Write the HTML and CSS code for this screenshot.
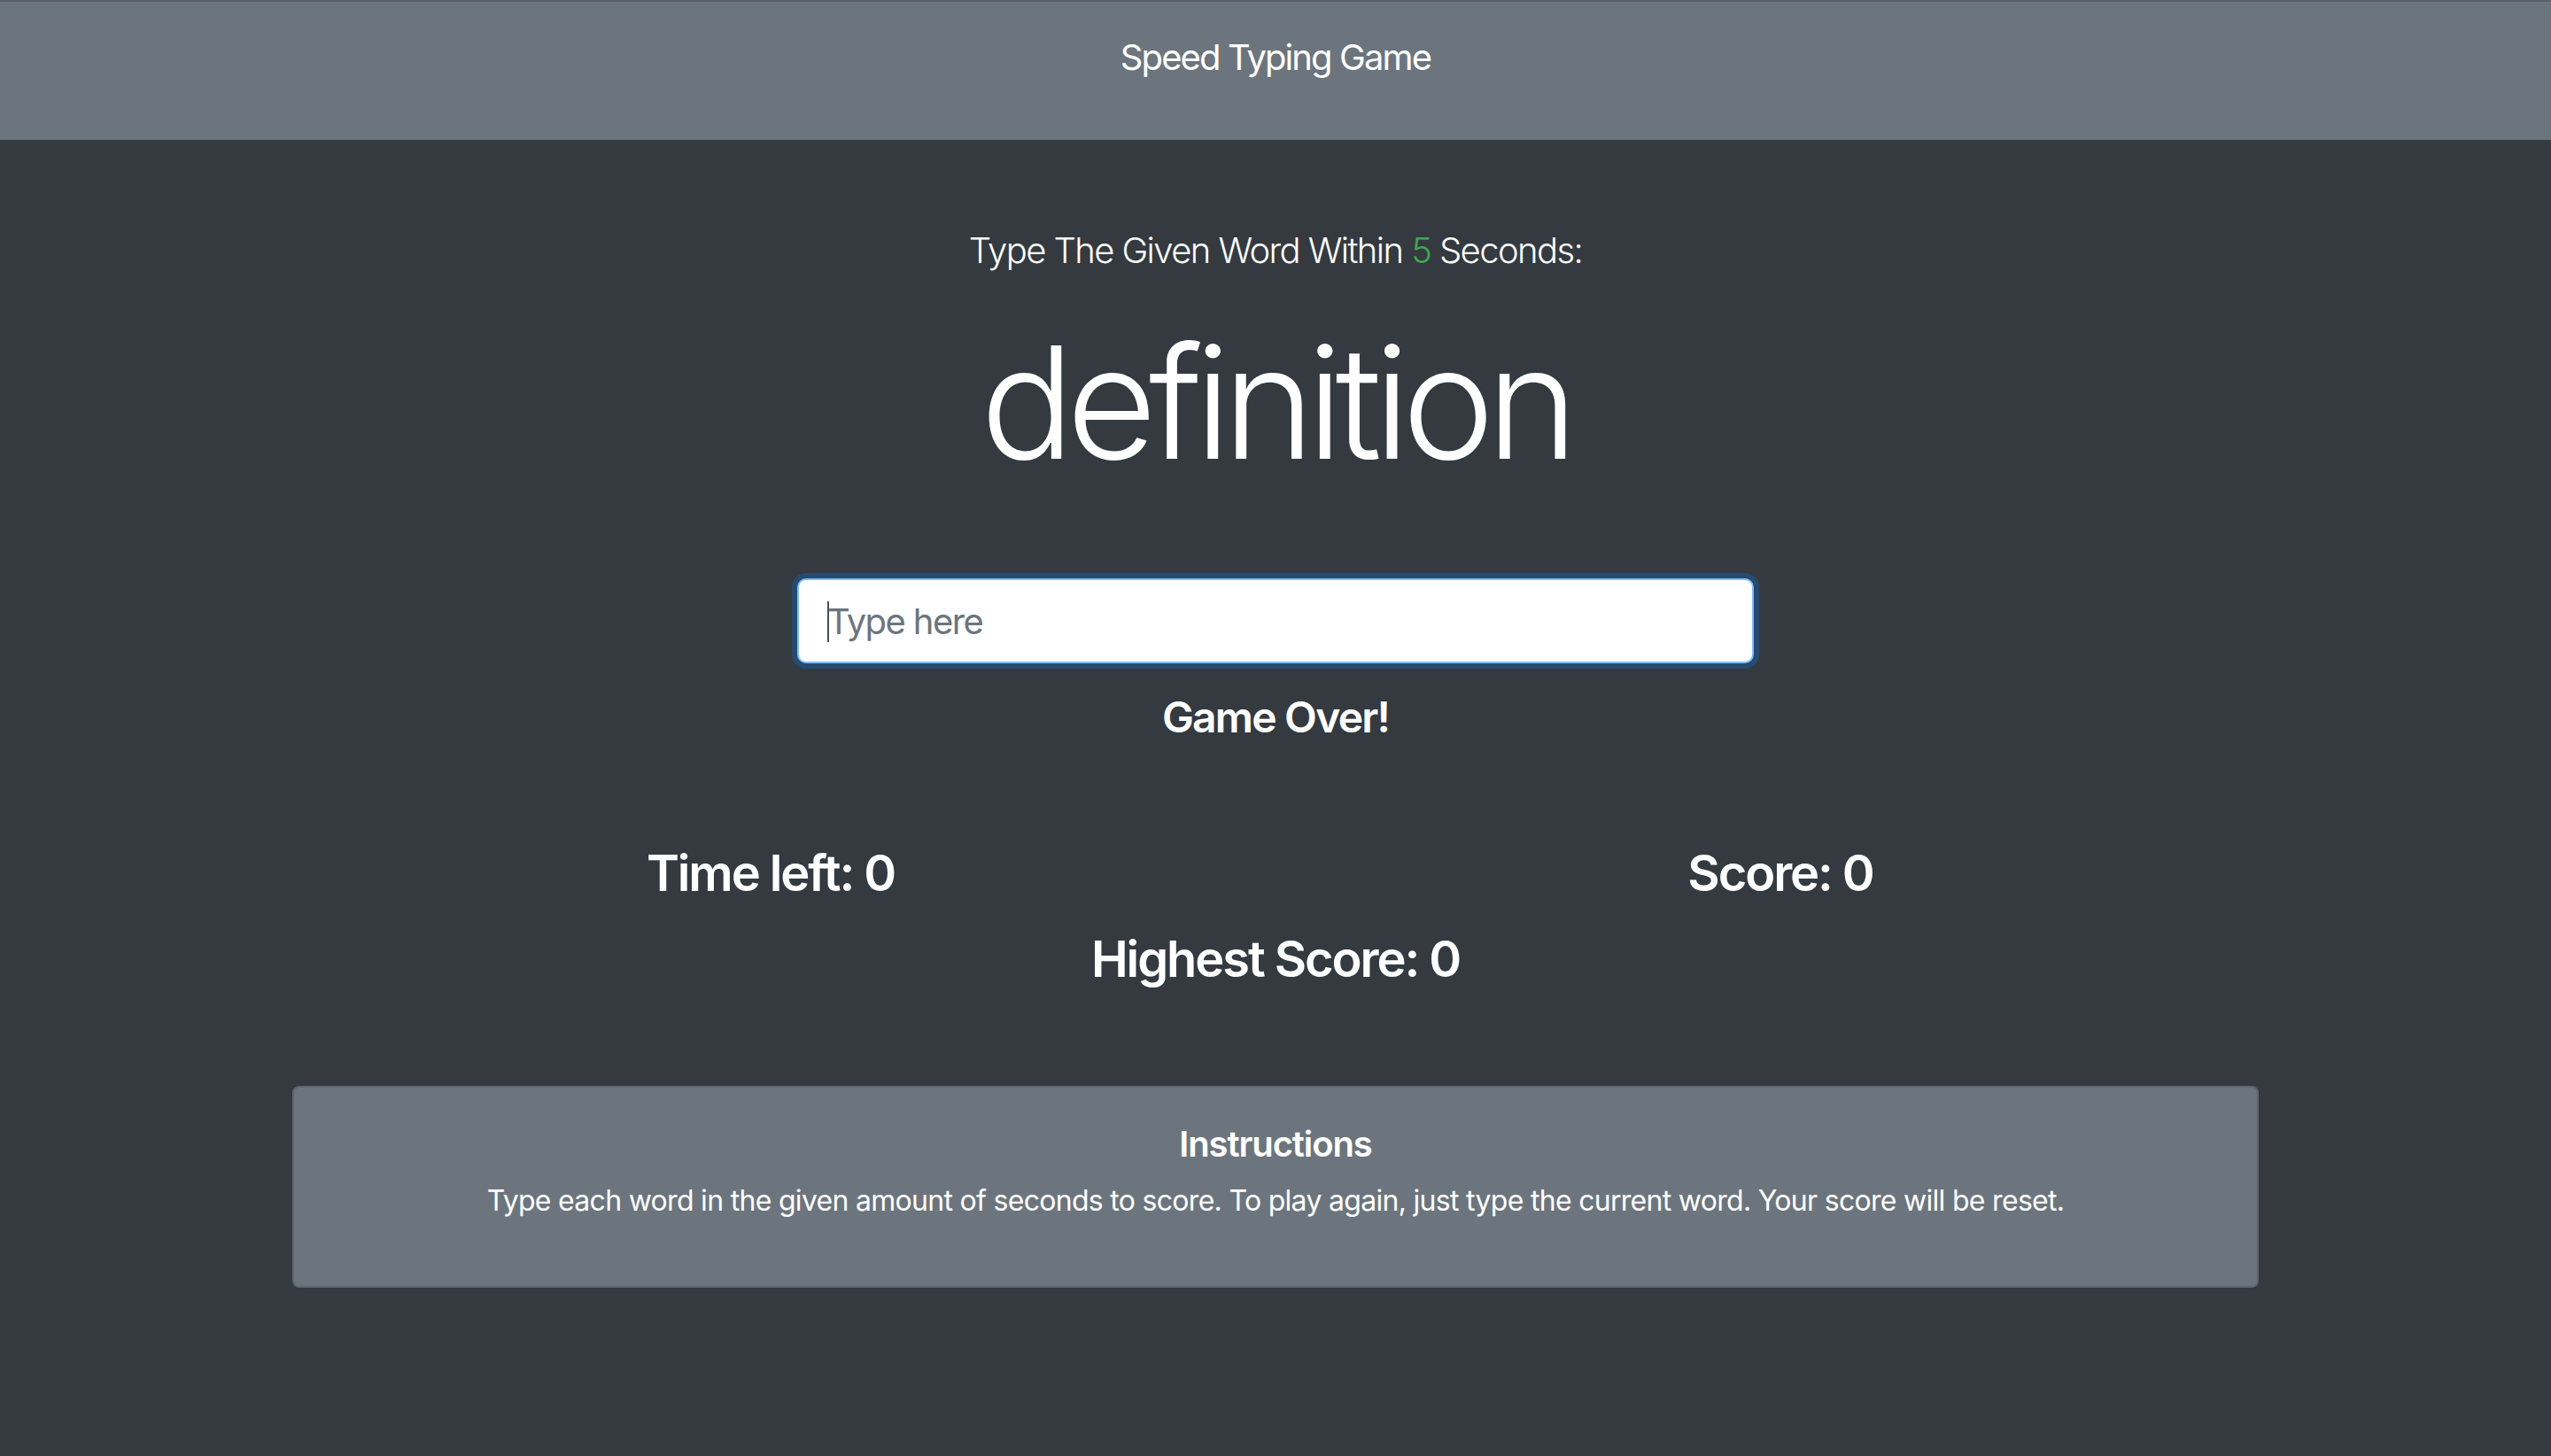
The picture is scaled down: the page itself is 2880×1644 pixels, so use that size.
FILE: index.html
```html
<!DOCTYPE html>
<html lang="en">
<head>
<meta charset="utf-8">
<title>Speed Typing Game</title>
<link rel="stylesheet" href="styles.css">
</head>
<body>
<header class="topbar">
  <h1 class="topbar-title">Speed Typing Game</h1>
</header>
<main class="game">
  <p class="lead">Type The Given Word Within <span class="seconds">5</span> Seconds:</p>
  <h2 class="word">definition</h2>
  <div class="input-wrap">
    <input class="word-input" type="text" placeholder="Type here">
    <span class="caret"></span>
  </div>
  <h4 class="status">Game Over!</h4>
  <div class="stats">
    <h3 class="stat">Time left: <span>0</span></h3>
    <h3 class="stat">Score: <span>0</span></h3>
  </div>
  <h3 class="stat highest">Highest Score: <span>0</span></h3>
  <section class="card">
    <h5 class="card-title">Instructions</h5>
    <p class="card-text">Type each word in the given amount of seconds to score. To play again, just type the current word. Your score will be reset.</p>
  </section>
</main>
</body>
</html>
```
FILE: styles.css
```css
html, body {
  margin: 0;
  padding: 0;
}
body {
  background: #343a40;
  color: #ffffff;
  font-family: Inter, "Noto Sans", "Liberation Sans", sans-serif;
  min-height: 1644px;
}
.topbar {
  background: #6c757d;
  border-top: 2px solid #5b6168;
  height: 156px;
  text-align: center;
}
.topbar-title {
  margin: 0;
  padding-top: 33px;
  font-size: 40px;
  line-height: 60px;
  font-weight: 400;
  letter-spacing: -1.9px;
}
.game {
  width: 2280px;
  margin: 0 auto;
  text-align: center;
  padding-top: 95px;
}
.lead {
  font-size: 40px;
  line-height: 60px;
  font-weight: 300;
  letter-spacing: -1.6px;
  margin: 0 0 35px;
}
.seconds {
  color: #3fa74f;
}
.word {
  font-size: 176px;
  line-height: 211px;
  font-weight: 300;
  letter-spacing: -9px;
  margin: 0 0 94px;
}
.input-wrap {
  width: 1080px;
  margin: 0 auto;
  position: relative;
}
.word-input {
  display: block;
  width: 100%;
  box-sizing: border-box;
  height: 96px;
  padding: 16px 32px;
  font-family: inherit;
  font-size: 40px;
  line-height: 60px;
  letter-spacing: -1.6px;
  color: #495057;
  background: #ffffff;
  border: 2px solid #80bdff;
  border-radius: 10px;
  box-shadow: 0 0 0 6px rgba(0, 123, 255, 0.25);
  outline: none;
}
.word-input::placeholder {
  color: #6c757d;
}
.caret {
  position: absolute;
  left: 34px;
  top: 26px;
  width: 2px;
  height: 46px;
  background: #495057;
}
.status {
  font-size: 48px;
  font-weight: 600;
  line-height: 58px;
  letter-spacing: -1.8px;
  margin: 32px 0 0;
}
.stats {
  display: grid;
  grid-template-columns: 1fr 1fr;
  margin-top: 114px;
}
.stat {
  font-size: 56px;
  font-weight: 600;
  line-height: 67px;
  letter-spacing: -2.1px;
  margin: 0;
}
.highest {
  margin-top: 30px;
}
.card {
  margin: 109px 30px 0;
  background: #6c757d;
  border: 2px solid rgba(0, 0, 0, 0.125);
  border-radius: 8px;
  padding: 40px;
}
.card-title {
  font-size: 40px;
  font-weight: 600;
  line-height: 48px;
  letter-spacing: -1.1px;
  margin: 0 0 16px;
}
.card-text {
  font-size: 32px;
  line-height: 48px;
  letter-spacing: -0.7px;
  margin: 0 0 32px;
}
```
